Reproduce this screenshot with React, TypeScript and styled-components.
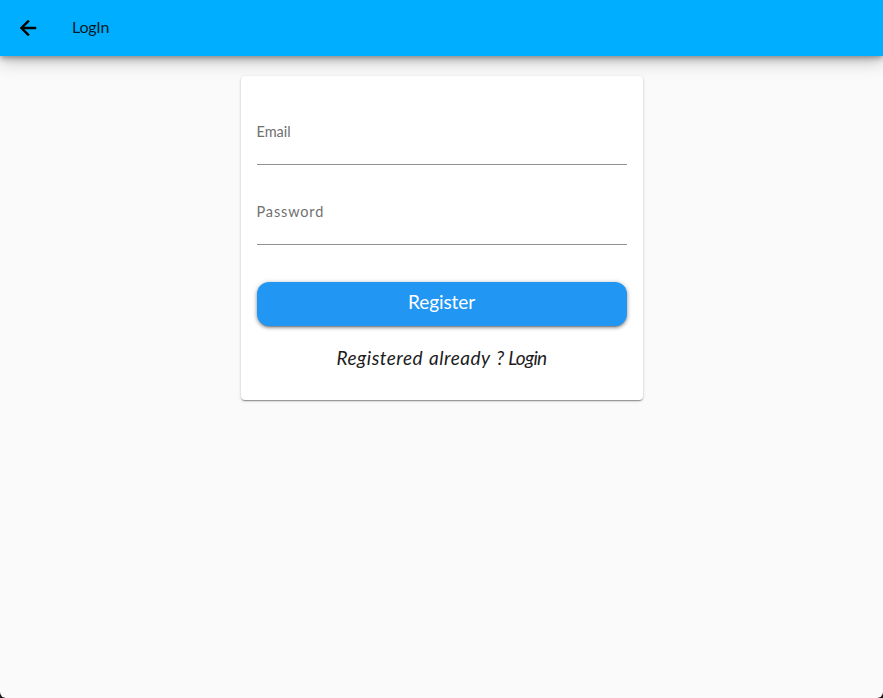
import React from "react";
import styled, { createGlobalStyle } from "styled-components";

const GlobalStyle = createGlobalStyle`
  *, *::before, *::after { box-sizing: border-box; }
  body { margin: 0; background: #17191c; }
`;

const Screen = styled.div`
  height: 698px;
  display: flex;
  flex-direction: column;
  align-items: center;
  overflow: hidden;
  background: #fafafa;
  border-radius: 0 0 6px 6px;
  font-family: Lato, sans-serif;
  color: #1c1c1c;
`;

const AppBar = styled.header`
  width: 100%;
  height: 56px;
  flex: none;
  display: flex;
  align-items: center;
  padding: 0 16px;
  gap: 32px;
  background: #00aeff;
  box-shadow: 0 2px 4px -1px rgba(0, 0, 0, 0.2), 0 4px 5px rgba(0, 0, 0, 0.14),
    0 4px 18px rgba(0, 0, 0, 0.27);
`;

const BackButton = styled.button`
  display: flex;
  padding: 0;
  border: 0;
  background: none;
  color: #000;
`;

const Title = styled.h1`
  margin: 0;
  padding-bottom: 2px;
  font-size: 16px;
  font-weight: 400;
  line-height: 24px;
  letter-spacing: -0.15px;
  color: #031b28;
`;

const Card = styled.form`
  width: 402px;
  height: 324px;
  margin-top: 20px;
  padding: 32px 16px 0;
  display: flex;
  flex-direction: column;
  background: #fff;
  border-radius: 4px;
  box-shadow: 0 2px 1px -1px rgba(0, 0, 0, 0.2), 0 1px 1px rgba(0, 0, 0, 0.14),
    0 1px 3px rgba(0, 0, 0, 0.22);
`;

const Field = styled.label<{ $tracking: number }>`
  height: 57px;
  margin-bottom: 23px;
  padding-top: 14px;
  border-bottom: 1px solid #929292;
  font-size: 14.5px;
  line-height: 20px;
  letter-spacing: ${(p) => p.$tracking}px;
  color: #707070;
`;

const SubmitButton = styled.button`
  height: 44px;
  margin-top: 14px;
  padding: 0 0 4px;
  border: 0;
  border-radius: 12px;
  background: #2196f3;
  color: #fff;
  font: 400 19px/24px Lato, sans-serif;
  letter-spacing: -0.1px;
  box-shadow: 0 3px 1px -2px rgba(0, 0, 0, 0.2), 0 2px 3px rgba(0, 0, 0, 0.2),
    0 1px 5px rgba(0, 0, 0, 0.32);
`;

const Prompt = styled.p`
  margin: 20px 0 0;
  display: flex;
  justify-content: center;
  white-space: pre;
  font-size: 19px;
  font-style: italic;
  line-height: 24px;
`;

const Phrase = styled.span<{ $tracking: number; $wordGap: number }>`
  letter-spacing: ${(p) => p.$tracking}px;
  word-spacing: ${(p) => p.$wordGap}px;
`;

export default function App() {
  return (
    <>
      <GlobalStyle />
      <Screen>
        <AppBar>
          <BackButton aria-label="Back">
            <svg width="24" height="24" viewBox="0 0 24 24" fill="currentColor">
              <path d="M20 11H7.83l5.59-5.59L12 4l-8 8 8 8 1.41-1.41L7.83 13H20v-2z" stroke="currentColor" strokeWidth="0.5" />
            </svg>
          </BackButton>
          <Title>LogIn</Title>
        </AppBar>
        <Card>
          <Field $tracking={0}>Email</Field>
          <Field $tracking={0.85}>Password</Field>
          <SubmitButton type="button">Register</SubmitButton>
          <Prompt>
            <Phrase $tracking={0.5} $wordGap={1}>Registered already </Phrase>
            <Phrase $tracking={-0.7} $wordGap={1}>? Login</Phrase>
          </Prompt>
        </Card>
      </Screen>
    </>
  );
}
